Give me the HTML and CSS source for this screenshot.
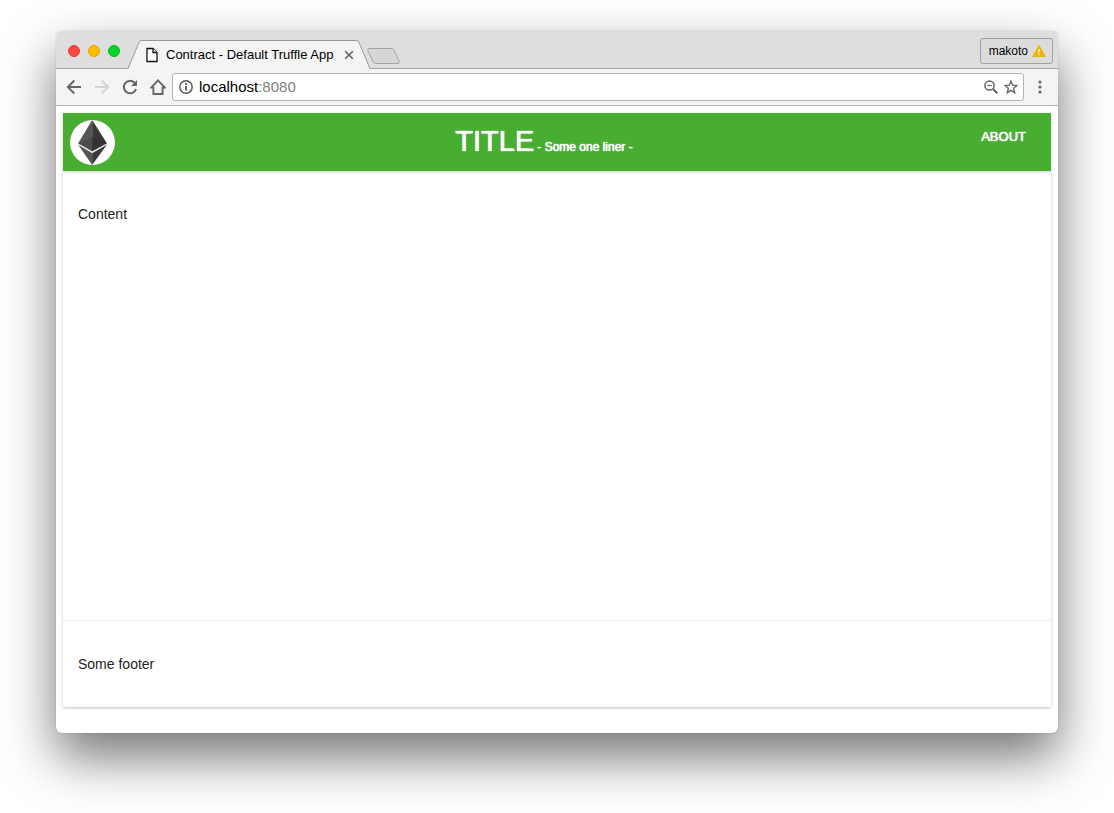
FILE: index.html
```html
<!DOCTYPE html>
<html lang="en">
<head>
<meta charset="utf-8">
<title>Contract - Default Truffle App</title>
<link rel="stylesheet" href="styles.css">
</head>
<body>
<div class="window">
  <div class="tabstrip">
    <div class="lights">
      <button class="light light-close" aria-label="Close window"></button>
      <button class="light light-min" aria-label="Minimize window"></button>
      <button class="light light-max" aria-label="Maximize window"></button>
    </div>
    <div class="tab">
      <svg class="slope" width="13" height="30" viewBox="0 0 13 30"><path d="M0 29.5 L11 2.5 Q12 .5 13 .5 V30 H0Z" fill="#f4f4f4"/><path d="M0 28.5 L11 2.5 Q12 .5 13 .5" fill="none" stroke="#999"/></svg>
      <div class="tab-body">
        <svg width="12" height="16" viewBox="0 0 12 16" fill="#fff" stroke="#111" stroke-width="1.3"><path d="M1 1.5H7L11 5.5V14.5H1Z"/><path d="M7 1.5V5.5H11"/></svg>
        <span class="tab-title">Contract - Default Truffle App</span>
        <button class="icon-button" aria-label="Close tab"><svg width="10" height="10" viewBox="0 0 10 10" stroke="#606060" stroke-width="1.6"><path d="M1.2 1.2L8.8 8.8M8.8 1.2L1.2 8.8"/></svg></button>
      </div>
      <svg class="slope" width="13" height="30" viewBox="0 0 13 30"><path d="M13 29.5 L2 2.5 Q1 .5 0 .5 V30 H13Z" fill="#f4f4f4"/><path d="M13 28.5 L2 2.5 Q1 .5 0 .5" fill="none" stroke="#999"/></svg>
    </div>
    <button class="icon-button new-tab" aria-label="New tab"><svg width="36" height="18" viewBox="0 0 36 18"><path d="M3 1.5H25Q27 1.5 28 3L33 14Q34 16.5 32 16.5H10Q8 16.5 7 14.5L2 4Q1 1.5 3 1.5Z" fill="#d6d6d6" stroke="#a3a3a3"/></svg></button>
    <button class="profile">makoto <svg width="14" height="12" viewBox="0 0 14 12"><path d="M7 .5L13.3 11.5H.7Z" fill="#ecb500" stroke="#ecb500" stroke-linejoin="round"/><path d="M7 4V7.5M7 8.7V10.1" stroke="#fff" stroke-width="1.3"/></svg></button>
  </div>

  <div class="toolbar">
    <button class="icon-button" aria-label="Back"><svg width="16" height="16" viewBox="0 0 16 16" fill="none" stroke="#666" stroke-width="1.9"><path d="M15 8H2M8.3 1.5L1.8 8L8.3 14.5"/></svg></button>
    <button class="icon-button" aria-label="Forward"><svg width="16" height="16" viewBox="0 0 16 16" fill="none" stroke="#d5d5d5" stroke-width="1.9"><path d="M1 8H14M7.7 1.5L14.2 8L7.7 14.5"/></svg></button>
    <button class="icon-button" aria-label="Reload"><svg width="16" height="16" viewBox="0 0 16 16"><path d="M14 10A6.2 6.2 0 1 1 12.5 3.7" fill="none" stroke="#666" stroke-width="2"/><path d="M15 1V7H9Z" fill="#666"/></svg></button>
    <button class="icon-button" aria-label="Home"><svg width="16" height="18" viewBox="1 0 16 18" fill="none" stroke="#666" stroke-width="1.9"><path d="M2.2 9.6L9 2.4L15.8 9.6H13.6V16H4.4V9.6Z"/></svg></button>
    <div class="omnibox">
      <svg width="14" height="14" viewBox="0 0 14 14"><circle cx="7" cy="7" r="6.2" fill="none" stroke="#555" stroke-width="1.4"/><path d="M7 6V10.5M7 3.3V5" stroke="#555" stroke-width="1.8"/></svg>
      <div class="address" role="textbox" contenteditable="true" aria-label="Address" spellcheck="false">localhost<span class="port">:8080</span></div>
      <button class="icon-button" aria-label="Zoom"><svg width="14" height="14" viewBox="0 0 14 14" fill="none" stroke="#666" stroke-width="1.5"><circle cx="5.5" cy="5.5" r="4.6"/><path d="M9 9L13.3 13.3" stroke-width="2"/><path d="M3.2 5.5H7.8" stroke-width="1.2"/></svg></button>
      <button class="icon-button" aria-label="Bookmark"><svg width="14" height="14" viewBox="0 0 14 14" fill="none" stroke="#666" stroke-width="1.4"><path d="M7 1.2L8.7 5.1L13 5.5L9.7 8.3L10.7 12.7L7 10.4L3.3 12.7L4.3 8.3L1 5.5L5.3 5.1Z"/></svg></button>
    </div>
    <button class="icon-button menu" aria-label="Menu"><svg width="4" height="14" viewBox="0 0 4 14" fill="#666"><circle cx="2" cy="2" r="1.6"/><circle cx="2" cy="7" r="1.6"/><circle cx="2" cy="12" r="1.6"/></svg></button>
  </div>

  <div class="page">
    <header class="header">
      <svg width="45" height="45" viewBox="0 0 45 45" role="img" aria-label="Ethereum"><circle cx="22.5" cy="22.5" r="22.5" fill="#fff"/><path d="M22.2 0L8 23.5L22.2 31.5Z" fill="#565656"/><path d="M22.2 0L37 23.5L22.2 31.5Z" fill="#383838"/><path d="M22.2 17.3L8 23.5L22.2 31.5Z" fill="#4c4c4c"/><path d="M22.2 17.3L37 23.5L22.2 31.5Z" fill="#333"/><path d="M8 24.5L22.2 33V45Z" fill="#555"/><path d="M37 24.5L22.2 33V45Z" fill="#393939"/><path d="M8 24L22.2 32.2L37 24" fill="none" stroke="#e0e0e0" stroke-width="1.4"/></svg>
      <h1 class="title">TITLE <small class="tagline">- Some one liner -</small></h1>
      <a class="about" href="#about">ABOUT</a>
    </header>
    <main class="panel content">Content</main>
    <footer class="panel footer">Some footer</footer>
  </div>
</div>
</body>
</html>
```
FILE: styles.css
```css
* {
  box-sizing: border-box;
}

body {
  display: flex;
  min-height: 100vh;
  margin: 0;
  padding: 31px 56px 80px;
  background: #fff;
  color: #222;
  font-family: "Liberation Sans", Arial, Helvetica, sans-serif;
  font-size: 14px;
}

button {
  font: inherit;
}

svg {
  display: block;
  flex: none;
}

.window {
  display: flex;
  flex: 1;
  flex-direction: column;
  min-width: 0;
  border-radius: 6px;
  background: #fff;
  box-shadow: 0 0 1px rgba(0, 0, 0, 0.4), 0 24px 52px rgba(0, 0, 0, 0.55);
}

.tabstrip {
  display: flex;
  align-items: flex-end;
  height: 38px;
  padding-top: 2px;
  border-bottom: 1px solid #a3a3a3;
  border-radius: 6px 6px 0 0;
  background: #dedede;
}

.lights {
  display: flex;
  align-self: center;
  gap: 8px;
  padding: 0 8px 0 12px;
}

.light {
  width: 12px;
  height: 12px;
  padding: 0;
  border: 1px solid;
  border-radius: 50%;
}

.light-close {
  border-color: #e83b35;
  background: #ff4844;
}

.light-min {
  border-color: #e6a500;
  background: #ffbd05;
}

.light-max {
  border-color: #05b91d;
  background: #05d32c;
}

.tab {
  display: flex;
  height: 29px;
  margin-bottom: -1px;
}

.tab-body {
  display: flex;
  align-items: center;
  width: 216px;
  height: 30px;
  padding: 0 3px 2px 5px;
  border-top: 1px solid #999;
  background: #f4f4f4;
}

.tab-title {
  padding-left: 8px;
  color: #000;
  font-size: 13px;
  white-space: nowrap;
}

.icon-button {
  flex: none;
  padding: 0;
  border: 0;
  background: none;
}

.tab-body .icon-button {
  margin-left: auto;
}

.new-tab {
  margin: 0 0 3px -4px;
}

.profile {
  display: flex;
  align-items: center;
  align-self: center;
  gap: 4px;
  height: 26px;
  margin: 0 5px 0 auto;
  padding: 0 6px 0 8px;
  border: 1px solid #a0a0a0;
  border-radius: 3px;
  background: #dcdcdc;
  color: #000;
  font-size: 12px;
}

.toolbar {
  display: flex;
  align-items: center;
  gap: 12px;
  height: 37px;
  padding: 0 16px 0 10px;
  border-bottom: 1px solid #b8b8b8;
  background: #f4f4f4;
}

.omnibox {
  display: flex;
  flex: 1;
  align-items: center;
  gap: 6px;
  height: 28px;
  margin-left: -6px;
  padding: 0 5px 0 6px;
  border: 1px solid #b4b4b4;
  border-radius: 3px;
  background: #fff;
}

.address {
  flex: 1;
  padding-bottom: 2px;
  color: #000;
  font-size: 15px;
}

.port {
  color: #808080;
}

.menu {
  margin-left: 2px;
}

.page {
  display: flex;
  flex: 1;
  flex-direction: column;
  padding: 7px 7px 26px;
}

.header {
  display: grid;
  grid-template-columns: 1fr auto 1fr;
  align-items: center;
  z-index: 1;
  height: 58px;
  padding: 0 25px 0 7px;
  background: #47ae32;
  box-shadow: 0 1px 3px rgba(0, 0, 0, 0.2);
  color: #fff;
}

.title {
  margin: 0 8px 2px 0;
  font-size: 29px;
  font-weight: 400;
  text-shadow: 0 0 1px #fff, 0 0 1px #fff;
  white-space: nowrap;
}

.tagline {
  margin-left: -5px;
  font-size: 12px;
}

.about {
  justify-self: end;
  margin-bottom: 12px;
  color: #fff;
  font-size: 13px;
  text-decoration: none;
  text-shadow: 0 0 1px #fff, 0 0 1px #fff;
}

.panel {
  padding: 35px 15px;
  background: #fff;
  box-shadow: 0 1px 3px rgba(0, 0, 0, 0.25);
  line-height: 16px;
}

.content {
  flex: 1;
  border-bottom: 1px solid #eee;
}

.footer {
  border-radius: 0 0 2px 2px;
  clip-path: inset(0 -4px -5px);
}
```
